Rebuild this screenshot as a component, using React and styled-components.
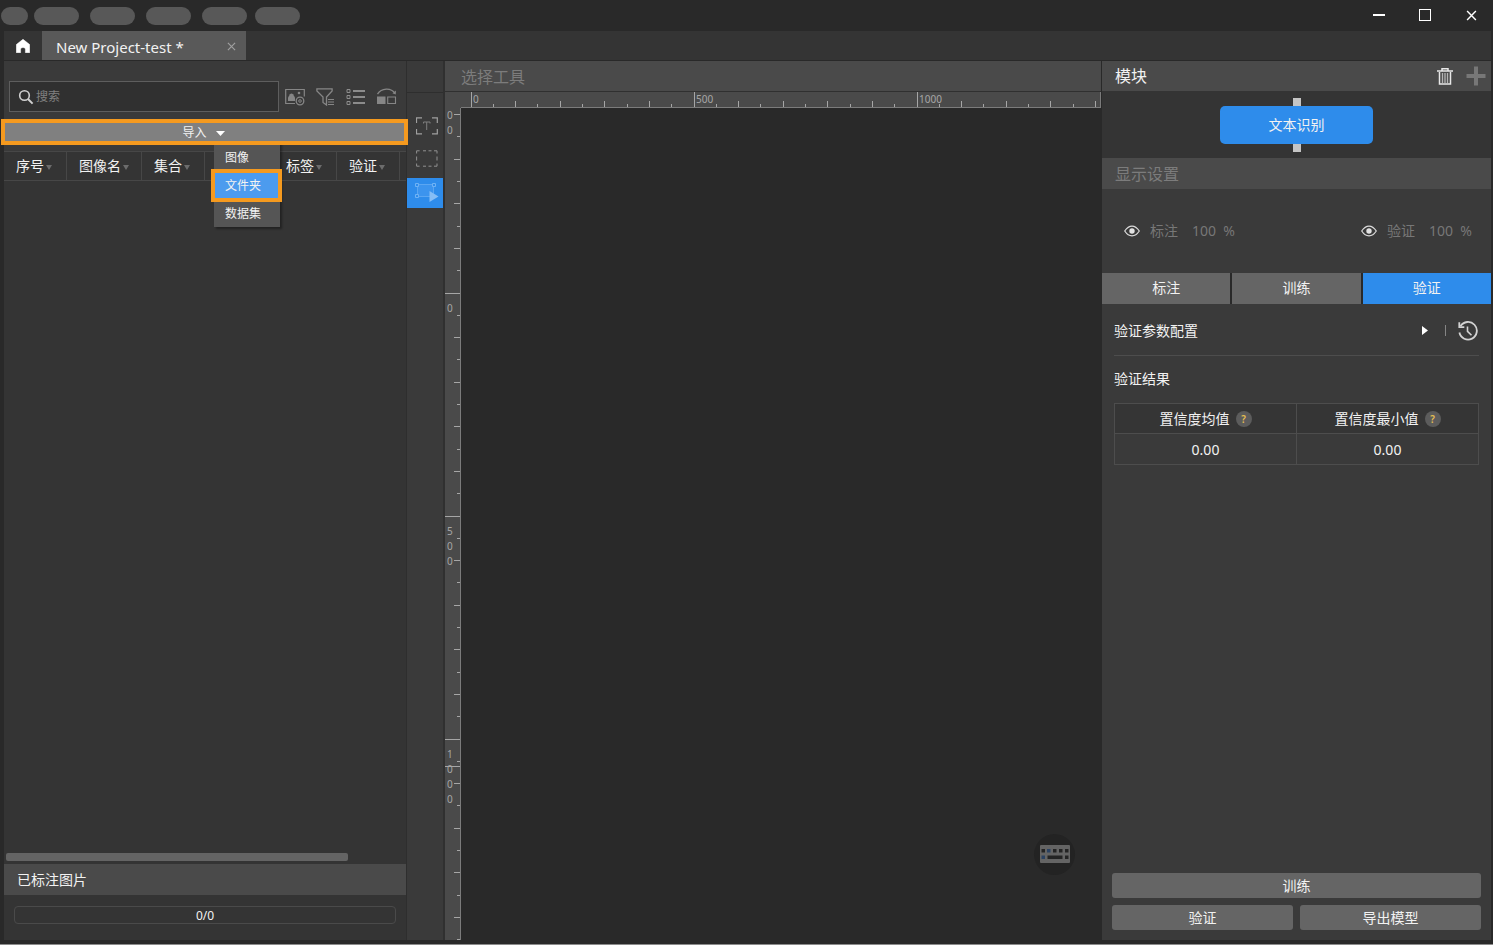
import React, { useState, useRef, useLayoutEffect } from "react";
import styled, { createGlobalStyle, css } from "styled-components";

const colors = {
  BG: "#292929",
  BAR: "#343434",
  PANEL: "#3a3a3a",
  HEADER: "#4a4a4a",
  BUTTON: "#656565",
  BLUE: "#2e8ceb",
  ORANGE: "#f59a1f",
  TEXT: "#f2f2f2",
  MUTED: "#7c7c7c",
};

const GlobalStyle = createGlobalStyle`
  * { box-sizing: border-box; }
  body {
    margin: 0;
    background: ${colors.BG};
    color: ${colors.TEXT};
    font: 14px/20px "Noto Sans", "Noto Sans CJK SC", sans-serif;
  }
  button, input {
    font: inherit;
    color: inherit;
    border: 0;
    padding: 0;
    background: none;
  }
  h2 { margin: 0; font-weight: 400; }
  svg { display: block; }
`;

const Window = styled.div`
  display: flex;
  flex-direction: column;
  min-height: 100vh;
  padding: 0 2px 4px 4px;
  border-bottom: 1px solid #8c8c8c;
`;

const TitleBar = styled.header`
  display: flex;
  align-items: center;
  justify-content: space-between;
  height: 31px;
  margin: 0 -2px 0 -3px;
`;

const MenuBar = styled.div`
  display: flex;
  gap: 11px;
`;

const Pill = styled.span`
  width: ${({ $short }) => ($short ? 27 : 45)}px;
  height: 18px;
  border-radius: 9px;
  background: #585858;
  ${({ $short }) => $short && "margin-right: -5px;"}
  &:last-child {
    margin-left: -3px;
  }
`;

const WindowButtons = styled.div`
  display: flex;
  button {
    display: grid;
    place-items: center;
    width: 46px;
    height: 31px;
    padding: 0 0 1px 2px;
  }
`;

const TabBar = styled.nav`
  display: flex;
  height: 30px;
  background: ${colors.BAR};
  border-bottom: 1px solid ${colors.BG};
`;

const HomeButton = styled.button`
  display: grid;
  place-items: center;
  width: 38px;
`;

const ProjectTab = styled.div`
  display: flex;
  align-items: center;
  justify-content: space-between;
  width: 204px;
  padding: 2px 10px 0 14px;
  font-size: 15px;
  background: #595959;
`;

const Workspace = styled.main`
  flex: 1;
  display: grid;
  grid-template-columns: 403px 38px minmax(0, 1fr) 389px;
`;

const LeftPanel = styled.section`
  display: flex;
  flex-direction: column;
  background: ${colors.PANEL};
  border-right: 1px solid #2e2e2e;
`;

const SearchRow = styled.div`
  display: flex;
  align-items: center;
  gap: 11px;
  padding: 20px 9px 0 5px;
`;

const SearchBox = styled.label`
  display: flex;
  align-items: center;
  gap: 2px;
  flex: 1;
  height: 31px;
  margin-right: -5px;
  padding: 0 8px;
  background: #303030;
  border: 1px solid #5e5e5e;
  input {
    flex: 1;
    min-width: 0;
    font-size: 12px;
    outline: none;
  }
  input::placeholder {
    color: #808080;
    opacity: 1;
  }
`;

const highlight = css`
  outline: 4px solid ${colors.ORANGE};
`;

const ImportArea = styled.div`
  position: relative;
  z-index: 1;
  margin: 11px 2px 10px 1px;
  font-size: 12px;
`;

const ImportButton = styled.button`
  display: flex;
  align-items: center;
  justify-content: center;
  gap: 9px;
  width: 100%;
  height: 18px;
  padding: 2px 2px 0 0;
  background: #808080;
  ${highlight};
`;

const ImportMenu = styled.div`
  position: absolute;
  z-index: -1;
  top: 18px;
  left: 209px;
  width: 66px;
  display: flex;
  flex-direction: column;
  gap: 3px;
  padding: 4px 2px 1px 1px;
  background: #555555;
  box-shadow: 2px 2px 2px rgba(0, 0, 0, 0.35);
`;

const MenuItem = styled.button`
  height: 25px;
  padding-left: 10px;
  text-align: left;
  ${({ $active }) =>
    $active &&
    css`
      background: #4c9bee;
      ${highlight};
    `}
`;

const ImageList = styled.div`
  flex: 1;
  display: flex;
  flex-direction: column;
  justify-content: space-between;
  background: ${colors.BAR};
`;

const ImageTable = styled.table`
  width: 100%;
  table-layout: fixed;
  border-collapse: separate;
  border-spacing: 0;
  border-top: 1px solid #474747;
  th {
    height: 29px;
    padding: 0 0 0 12px;
    font-weight: 400;
    text-align: left;
    white-space: nowrap;
    border-right: 1px solid #474747;
    border-bottom: 1px solid #474747;
  }
  th:last-child {
    border-right: 0;
  }
`;

const SortCaret = styled.span`
  display: inline-block;
  margin-left: 2px;
  vertical-align: 1px;
  border: 3px solid transparent;
  border-top: 5px solid #6c6c6c;
  border-bottom: 0;
`;

const ScrollThumb = styled.div`
  width: 85%;
  height: 8px;
  margin: 0 0 3px 2px;
  border-radius: 2px;
  background: #646464;
`;

const PanelHeader = styled.h2`
  display: flex;
  align-items: center;
  justify-content: space-between;
  height: ${({ $tall }) => ($tall ? 31 : 30)}px;
  padding: 0 5px 0 13px;
  font-size: ${({ $small }) => ($small ? 14 : 16)}px;
  color: ${({ $muted }) => ($muted ? colors.MUTED : colors.TEXT)};
  background: ${colors.HEADER};
`;

const ProgressArea = styled.div`
  padding: 11px 10px 16px;
  background: ${colors.BAR};
`;

const Progress = styled.div`
  height: 18px;
  border: 1px solid #4a4a4a;
  border-radius: 4px;
  font-size: 12px;
  line-height: 17px;
  text-align: center;
`;

const ToolStrip = styled.aside`
  display: flex;
  flex-direction: column;
  background: ${colors.PANEL};
  border-right: 2px solid #303030;
  &:before {
    content: "";
    height: 31px;
    margin-bottom: 19px;
    border-bottom: 1px solid #2e2e2e;
  }
`;

const ToolButton = styled.button`
  display: grid;
  place-items: center;
  height: 30px;
  margin-bottom: 3px;
  padding: 0 0 2px 3px;
  background: ${({ $active }) => ($active ? colors.BLUE : "none")};
`;

const CanvasArea = styled.section`
  position: relative;
  display: grid;
  grid-template: 31px 16px minmax(0, 1fr) / 16px minmax(0, 1fr);
  border-right: 1px solid ${colors.BG};
  ${PanelHeader} {
    grid-column: 1 / -1;
    height: 31px;
    padding: 2px 16px 0;
    border-bottom: 1px solid #303030;
  }
`;

const RulerCorner = styled.div`
  background: ${colors.HEADER};
`;

const RulerFrame = styled.div`
  position: relative;
  overflow: hidden;
  background: ${colors.HEADER};
  border: 0 solid #7b7b7b;
  border-width: ${({ $vertical }) => ($vertical ? "0 1px 0 0" : "0 1px 1px 0")};
  svg {
    position: absolute;
    width: 100%;
    height: 100%;
    fill: #a6a6a6;
    font-size: 10px;
  }
`;

const KeyboardButton = styled.button`
  position: absolute;
  right: 26px;
  bottom: 65px;
  display: grid;
  place-items: center;
  width: 41px;
  height: 41px;
  padding-bottom: 2px;
  border-radius: 50%;
  background: #232323;
`;

const RightPanel = styled.section`
  display: flex;
  flex-direction: column;
  background: ${colors.PANEL};
`;

const HeaderActions = styled.span`
  display: flex;
  align-items: center;
  gap: 13px;
`;

const ModuleFlow = styled.div`
  display: flex;
  flex-direction: column;
  align-items: center;
  padding: 7px 0 6px;
  background: ${colors.BAR};
`;

const Port = styled.span`
  width: 8px;
  height: 8px;
  background: #c5c5c5;
`;

const ModuleNode = styled.button`
  width: 153px;
  height: 38px;
  border-radius: 5px;
  background: ${colors.BLUE};
`;

const DisplayRow = styled.div`
  display: flex;
  align-items: center;
  justify-content: space-between;
  height: 84px;
  padding: 0 19px 0 22px;
  color: #777777;
`;

const Opacity = styled.span`
  display: flex;
  align-items: center;
  span {
    margin: 0 14px 0 10px;
  }
`;

const StageTabs = styled.div`
  display: grid;
  grid-template-columns: repeat(3, 1fr);
  gap: 2px;
  height: 31px;
  background: ${colors.BG};
`;

const StageTab = styled.button`
  padding-bottom: 1px;
  background: ${({ $active }) => ($active ? colors.BLUE : colors.BUTTON)};
`;

const Details = styled.div`
  flex: 1;
  padding: 0 12px;
`;

const ParamRow = styled.div`
  display: flex;
  align-items: center;
  height: 52px;
  padding: 2px 1px 0 0;
  border-bottom: 1px solid #4d4d4d;
  > :nth-child(2) {
    margin-left: auto;
  }
`;

const ParamTitle = styled.h2`
  font-size: 14px;
`;

const Divider = styled.span`
  width: 1px;
  height: 11px;
  margin: 0 12px 0 17px;
  background: #858585;
`;

const ResultTitle = styled.h2`
  padding: 13px 0 14px;
  font-size: 14px;
`;

const ResultTable = styled.table`
  width: 100%;
  table-layout: fixed;
  border-collapse: collapse;
  text-align: center;
  th,
  td {
    height: 30px;
    padding: 0;
    font-weight: 400;
    border: 1px solid #4d4d4d;
  }
  th {
    background: #353535;
  }
  td {
    height: 31px;
    padding-top: 1px;
  }
`;

const Help = styled.span`
  display: inline-block;
  width: 16px;
  height: 16px;
  margin-left: 6px;
  border-radius: 50%;
  background: #5c5c5c;
  color: #e5bd52;
  font-size: 10px;
  font-weight: 600;
  line-height: 16px;
  vertical-align: 1px;
`;

const Actions = styled.div`
  display: grid;
  grid-template-columns: 1fr 1fr;
  gap: 7px;
  padding: 0 10px;
  margin-bottom: 10px;
`;

const ActionButton = styled.button`
  height: 25px;
  border-radius: 3px;
  background: ${colors.BUTTON};
  ${({ $wide }) => $wide && "grid-column: 1 / -1;"}
`;

const PX_PER_50 = 22.3;

const Ruler = ({ vertical, origin, from, marker }) => {
  const frameRef = useRef();
  const [length, setLength] = useState(0);

  useLayoutEffect(() => {
    const frame = frameRef.current;
    const measure = () =>
      setLength(vertical ? frame.clientHeight : frame.clientWidth);
    measure();
    const observer = new ResizeObserver(measure);
    observer.observe(frame);
    return () => observer.disconnect();
  }, [vertical]);

  const marks = [];
  for (let value = from; ; value += 50) {
    const pos = Math.floor(origin + (value / 50) * PX_PER_50);
    if (pos >= length) break;
    marks.push({ value, pos });
  }

  const renderLabel = (value, pos) => {
    if (!vertical)
      return pos + 28 < length ? (
        <text x={pos + 2} y={11}>
          {value}
        </text>
      ) : null;

    // one character per line, only those that fit in the ruler
    return String(value)
      .split("")
      .map((char, i) => ({ char, y: pos + 19 + i * 15 }))
      .filter(({ y }) => y > 10 && y < length)
      .map(({ char, y }) => (
        <text key={y} x={2} y={y}>
          {char}
        </text>
      ));
  };

  return (
    <RulerFrame ref={frameRef} $vertical={vertical}>
      <svg shapeRendering="crispEdges">
        {marks.map(({ value, pos }) => {
          const major = value % 500 === 0;
          const size = major ? 15 : value % 100 === 0 ? 6 : 3;
          return (
            <g key={value}>
              {vertical ? (
                <rect x={15 - size} y={pos} width={size} height={1} />
              ) : (
                <rect x={pos} y={15 - size} width={1} height={size} />
              )}
              {major && renderLabel(value, pos)}
            </g>
          );
        })}
        {marker && <rect x={0} y={marker} width={15} height={1} />}
      </svg>
    </RulerFrame>
  );
};

const HomeIcon = () => (
  <svg width="14" height="14" viewBox="0 0 14 14" fill="#fff">
    <path d="M7 .3.3 5.600V13.700h4.300V10q0-1.500 2.400-1.500T9.400 10v3.700h4.300V5.600z" stroke="#fff" strokeWidth=".5" strokeLinejoin="round" />
  </svg>
);

const CrossIcon = ({ size, color }) => (
  <svg width={size} height={size} viewBox="0 0 10 10" stroke={color} strokeWidth="1.3">
    <path d="M1 1l8 8M9 1 1 9" />
  </svg>
);

const SearchIcon = () => (
  <svg width="16" height="16" viewBox="0 0 16 16" fill="none" stroke="#d0d0d0">
    <circle cx="6.5" cy="6.5" r="4.8" strokeWidth="1.6" />
    <path d="m10 10 4.6 4.6" strokeWidth="2" />
  </svg>
);

const ImageIcon = () => (
  <svg width="20" height="18" viewBox="0 0 20 18" fill="none" stroke="#868686">
    <path d="M10 15.5H.7V1.5h18.6v7" strokeWidth="1.2" />
    <path d="M3 13V9.5L5 6.3q1.5-1.6 3 0L10 9.5V13z" fill="#868686" stroke="none" />
    <circle cx="14" cy="5" r="1.3" fill="#868686" stroke="none" />
    <circle cx="15" cy="13" r="3.8" strokeWidth="1.3" />
    <circle cx="15" cy="13" r="1.3" />
  </svg>
);

const FilterIcon = () => (
  <svg width="19" height="18" viewBox="0 0 19 18" fill="none" stroke="#868686">
    <path d="M.9.9h15.2v2L10.5 9v8L7 14.5V9L.9 2.9z" strokeWidth="1.3" />
    <path d="M12 11.5h6M12 14h6M12 16.5h6" strokeWidth="1.2" />
  </svg>
);

const ListIcon = () => (
  <svg width="19" height="16" viewBox="0 0 19 16" fill="none" stroke="#8c8c8c">
    <path d="M1 .5h3v3H1zM1 6.5h3v3H1zM1 12.5h3v3H1z" />
    <path d="M7 2h12M7 8h12M7 14h12" strokeWidth="2" />
  </svg>
);

const SwapIcon = () => (
  <svg width="21" height="17" viewBox="0 0 21 17" fill="none" stroke="#868686">
    <path d="M1.500 6.200C5.500-.2 15-.6 19 5.400" strokeWidth="1.3" />
    <path d="m20 2.600-.3 3.800-3.300-1.200z" fill="#868686" stroke="none" />
    <path d="M1 8.500h8.500V16H1z" fill="#868686" stroke="none" />
    <path d="M11.700 9h7.800v6.500h-7.800z" strokeWidth="1.1" />
  </svg>
);

const TextToolIcon = () => (
  <svg width="22" height="18" viewBox="0 0 22 18" fill="none" stroke="#a0a0a0">
    <path d="M.5 6V.8h5.500M16 .8h5.300V6M21.300 12v4.800H16M6 16.800H.5V12" strokeWidth="1.2" />
    <path d="M7.500 6.500V5h6.500v1.500M10.700 5v8" stroke="#7e7e7e" />
  </svg>
);

const RegionIcon = () => (
  <svg width="22" height="18" viewBox="0 0 22 18" fill="none" stroke="#909090">
    <path d="M.6 3.500V.8h3M7 .8h3M12.500.8h3M18 .8h3v2.700M21 6.500v4M21 13.500v2.700h-3M15.500 16.200h-3M10 16.200H7M3.600 16.200h-3v-2.700M.6 10.500v-4" />
  </svg>
);

const SelectToolIcon = () => (
  <svg width="25" height="20" viewBox="0 0 25 20" fill="none" stroke="#6fb2f5">
    <path d="M3.500 2.500h16v12h-16z" fill="#3c94ee" stroke="#5ba6f2" />
    <path d="M1.500 1.500h3v3h-3zM18.500 1.500h3v3h-3zM1.500 12.500h3v3h-3z" fill="#2e8ceb" />
    <path d="m15.500 9 9 5.500-9 5.500z" fill="#86bdf5" stroke="none" />
  </svg>
);

const TrashIcon = () => (
  <svg width="16" height="17" viewBox="0 0 16 17" fill="none" stroke="#e8e8e8">
    <path d="M0 3h16M5 3V.8h6V3" strokeWidth="1.5" />
    <path d="M2.500 4v12h11V4" strokeWidth="1.500" />
    <path d="M5.500 5v10M8 5v10M10.500 5v10" strokeWidth="1.300" stroke="#b4b4b4" />
  </svg>
);

const PlusIcon = () => (
  <svg width="20" height="20" viewBox="0 0 20 20" stroke="#777" strokeWidth="4">
    <path d="M10 .5v19M.5 10h19" />
  </svg>
);

const EyeIcon = () => (
  <svg width="16" height="12" viewBox="0 0 16 12" fill="none" stroke="#dcdcdc">
    <path d="M.7 6Q4 1.100 8 1.100T15.300 6Q12 10.900 8 10.900T.7 6z" strokeWidth="1.200" />
    <circle cx="8" cy="6" r="2.700" fill="#e2e2e2" stroke="none" />
  </svg>
);

const HistoryIcon = () => (
  <svg width="20" height="20" viewBox="0 0 20 20" fill="none" stroke="#d2d2d2">
    <path d="M2.500 5.200A8.800 8.800 0 1 1 1.400 11.500" strokeWidth="1.800" />
    <path d="M1.300 1.200v5h5" strokeWidth="1.800" />
    <path d="M9.500 5.500v4.800l4 4" strokeWidth="1.600" />
  </svg>
);

const KeyboardIcon = () => (
  <svg width="30" height="18" viewBox="0 0 30 18" fill="#242424">
    <rect width="30" height="18" rx="1" fill="#646464" />
    <path d="M1.500 4H5v3.500H1.500zM13 4h3.500v3.500H13zM19 4h3.500v3.500H19zM25 4h3.500v3.500H25zM7.500 10.500h15V14h-15zM25 10.500h3.500V14H25z" />
    <path d="M7 4h3.500v3.500H7zM1.500 10.500H5V14H1.500z" fill="#2b4262" />
  </svg>
);

const columns = [
  { label: "序号", width: 63 },
  { label: "图像名", width: 75 },
  { label: "集合", width: 63 },
  { label: "", width: 69 },
  { label: "标签", width: 63 },
  { label: "验证", width: 63 },
  { label: "" },
];

const importOptions = ["图像", "文件夹", "数据集"];
const stages = ["标注", "训练", "验证"];
const tools = [TextToolIcon, RegionIcon, SelectToolIcon];

const App = () => {
  const [source, setSource] = useState("文件夹");
  const [menuOpen, setMenuOpen] = useState(true);
  const [stage, setStage] = useState("验证");
  const [tool, setTool] = useState(2);

  return (
    <Window>
      <GlobalStyle />
      <TitleBar>
        <MenuBar>
          <Pill $short />
          <Pill />
          <Pill />
          <Pill />
          <Pill />
          <Pill />
        </MenuBar>
        <WindowButtons>
          <button>
            <svg width="12" height="2" fill="#fff">
              <rect width="12" height="2" />
            </svg>
          </button>
          <button>
            <svg width="12" height="12" fill="none" stroke="#fff">
              <rect x=".5" y=".5" width="11" height="11" />
            </svg>
          </button>
          <button>
            <CrossIcon size={11} color="#fff" />
          </button>
        </WindowButtons>
      </TitleBar>

      <TabBar>
        <HomeButton>
          <HomeIcon />
        </HomeButton>
        <ProjectTab>
          New Project-test *
          <button>
            <CrossIcon size={9} color="#a0a0a0" />
          </button>
        </ProjectTab>
      </TabBar>

      <Workspace>
        <LeftPanel>
          <SearchRow>
            <SearchBox>
              <SearchIcon />
              <input type="text" placeholder="搜索" />
            </SearchBox>
            <button>
              <ImageIcon />
            </button>
            <button>
              <FilterIcon />
            </button>
            <button>
              <ListIcon />
            </button>
            <button>
              <SwapIcon />
            </button>
          </SearchRow>

          <ImportArea>
            <ImportButton onClick={() => setMenuOpen((prev) => !prev)}>
              导入
              <svg width="9" height="5" fill="#fff">
                <path d="M0 0h9L4.500 5z" />
              </svg>
            </ImportButton>
            {menuOpen && (
              <ImportMenu>
                {importOptions.map((option) => (
                  <MenuItem
                    key={option}
                    $active={option === source}
                    onClick={() => setSource(option)}
                  >
                    {option}
                  </MenuItem>
                ))}
              </ImportMenu>
            )}
          </ImportArea>

          <ImageList>
            <ImageTable>
              <colgroup>
                {columns.map(({ width }, i) => (
                  <col key={i} width={width} />
                ))}
              </colgroup>
              <thead>
                <tr>
                  {columns.map(({ label }, i) => (
                    <th key={i}>
                      {label}
                      {label && <SortCaret />}
                    </th>
                  ))}
                </tr>
              </thead>
            </ImageTable>
            <ScrollThumb />
          </ImageList>

          <PanelHeader $tall $small>
            已标注图片
          </PanelHeader>
          <ProgressArea>
            <Progress>0/0</Progress>
          </ProgressArea>
        </LeftPanel>

        <ToolStrip>
          {tools.map((ToolIcon, i) => (
            <ToolButton key={i} $active={i === tool} onClick={() => setTool(i)}>
              <ToolIcon />
            </ToolButton>
          ))}
        </ToolStrip>

        <CanvasArea>
          <PanelHeader $muted>选择工具</PanelHeader>
          <RulerCorner />
          <Ruler origin={10} from={0} />
          <Ruler vertical origin={185} from={-500} marker={658} />
          <KeyboardButton>
            <KeyboardIcon />
          </KeyboardButton>
        </CanvasArea>

        <RightPanel>
          <PanelHeader>
            模块
            <HeaderActions>
              <button>
                <TrashIcon />
              </button>
              <button>
                <PlusIcon />
              </button>
            </HeaderActions>
          </PanelHeader>
          <ModuleFlow>
            <Port />
            <ModuleNode>文本识别</ModuleNode>
            <Port />
          </ModuleFlow>
          <PanelHeader $tall $muted>
            显示设置
          </PanelHeader>
          <DisplayRow>
            {["标注", "验证"].map((name) => (
              <Opacity key={name}>
                <EyeIcon />
                <span>{name}</span>
                100 &nbsp;%
              </Opacity>
            ))}
          </DisplayRow>
          <StageTabs>
            {stages.map((name) => (
              <StageTab
                key={name}
                $active={name === stage}
                onClick={() => setStage(name)}
              >
                {name}
              </StageTab>
            ))}
          </StageTabs>
          <Details>
            <ParamRow>
              <ParamTitle>验证参数配置</ParamTitle>
              <button>
                <svg width="6" height="9" fill="#fff">
                  <path d="M0 0v9l6-4.500z" />
                </svg>
              </button>
              <Divider />
              <button>
                <HistoryIcon />
              </button>
            </ParamRow>
            <ResultTitle>验证结果</ResultTitle>
            <ResultTable>
              <thead>
                <tr>
                  <th>
                    置信度均值<Help>?</Help>
                  </th>
                  <th>
                    置信度最小值<Help>?</Help>
                  </th>
                </tr>
              </thead>
              <tbody>
                <tr>
                  <td>0.00</td>
                  <td>0.00</td>
                </tr>
              </tbody>
            </ResultTable>
          </Details>
          <Actions>
            <ActionButton $wide>训练</ActionButton>
            <ActionButton>验证</ActionButton>
            <ActionButton>导出模型</ActionButton>
          </Actions>
        </RightPanel>
      </Workspace>
    </Window>
  );
};

export default App;
